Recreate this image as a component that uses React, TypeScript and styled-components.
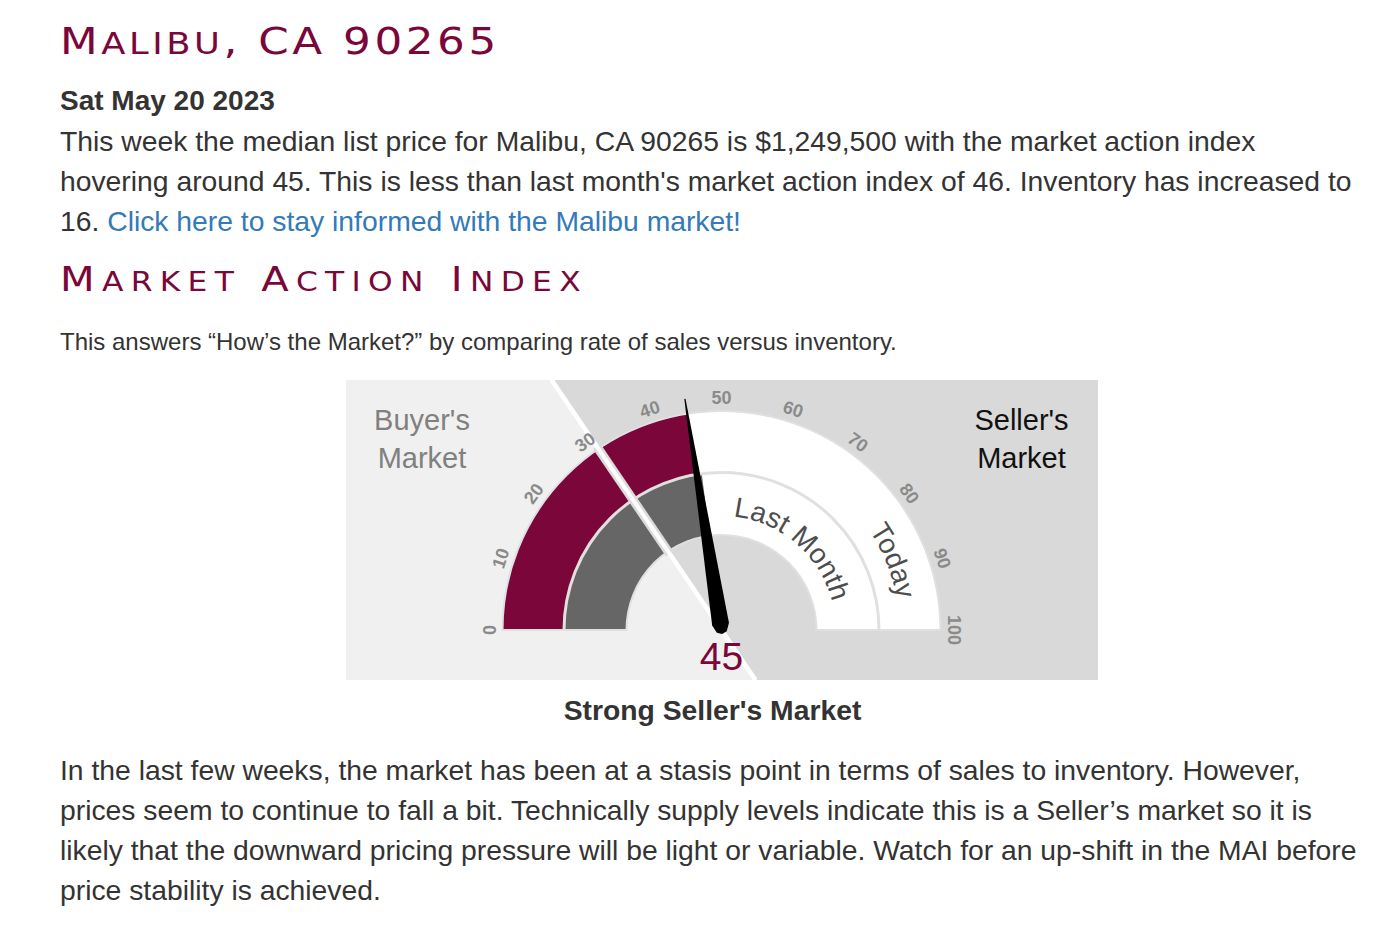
import React from "react";
import styled, { createGlobalStyle } from "styled-components";

const MAROON = "#7a063a";

const GlobalStyle = createGlobalStyle`
  body {
    margin: 0;
    background: #fff;
    color: #333;
    font-family: "Liberation Sans", Arial, sans-serif;
  }
`;

const Page = styled.main`
  width: 1305px;
  padding: 20px 0 0 60px;
`;

const Title = styled.h1<{ $size: number; $spacing: number; $lower: number }>`
  width: fit-content;
  margin: 0;
  font-family: "DejaVu Sans", Verdana, sans-serif;
  font-weight: normal;
  font-size: ${(p) => p.$size}px;
  line-height: 44px;
  letter-spacing: ${(p) => p.$spacing}px;
  color: ${MAROON};
  white-space: nowrap;
  transform: scaleX(1.18);
  transform-origin: left center;

  span {
    font-size: ${(p) => p.$lower}em;
    text-transform: uppercase;
  }
`;

const Lead = styled.p`
  margin: 15px 0 0;
  font-size: 28.3px;
  line-height: 40px;
`;

const DateLine = styled.strong`
  display: block;
  font-size: 28px;
`;

const Link = styled.a`
  color: #337ab7;
  text-decoration: none;
`;

const SectionTitle = styled(Title)`
  margin-top: 16px;
`;

const Note = styled.p`
  margin: 23px 0 0;
  font-size: 24px;
  line-height: 30px;
`;

const Panel = styled.figure`
  margin: 23px 0 0 286px;
  width: 752px;
  height: 300px;
  overflow: hidden;
`;

const GaugeSvg = styled.svg`
  display: block;
  font-family: "Liberation Sans", Arial, sans-serif;
`;

const Verdict = styled.div`
  margin-top: 10px;
  text-align: center;
  font-weight: bold;
  font-size: 28.3px;
  line-height: 40px;
`;

const Summary = styled.p`
  margin: 20px 0 0;
  font-size: 28.3px;
  line-height: 40px;
`;

const TickLabel = styled.text`
  font-weight: bold;
  font-size: 18px;
  fill: #8a8a8a;
`;

const SideLabel = styled.text<{ $dark?: boolean }>`
  font-size: 29px;
  fill: ${(p) => (p.$dark ? "#111" : "#808080")};
`;

const ArcLabel = styled.text`
  font-size: 28px;
  fill: #4d4d4d;
`;

const Reading = styled.text`
  font-size: 39px;
  fill: ${MAROON};
`;

// first letter of each word full size, the lower-case rest as small capitals
const SmallCaps = ({ text }: { text: string }) => (
  <>
    {text.split(/(\s+)/).map((word, i) => {
      const head = word.slice(0, 1);
      const rest = word.slice(1);
      const lowerRun = rest.match(/^[a-z]+/);
      if (!lowerRun) return <React.Fragment key={i}>{word}</React.Fragment>;
      return (
        <React.Fragment key={i}>
          {head}
          <span>{lowerRun[0]}</span>
          {rest.slice(lowerRun[0].length)}
        </React.Fragment>
      );
    })}
  </>
);

const CX = 375.5;
const CY = 250;

const ang = (v: number) => Math.PI - (v / 100) * Math.PI;
const pt = (r: number, v: number) => [CX + r * Math.cos(ang(v)), CY - r * Math.sin(ang(v))];

const sector = (r1: number, r2: number, v1: number, v2: number) => {
  const [ax, ay] = pt(r2, v1);
  const [bx, by] = pt(r2, v2);
  const [cx, cy] = pt(r1, v2);
  const [dx, dy] = pt(r1, v1);
  return `M${ax} ${ay} A${r2} ${r2} 0 0 1 ${bx} ${by} L${cx} ${cy} A${r1} ${r1} 0 0 0 ${dx} ${dy} Z`;
};

const arcFrom = (r: number, degStart: number) => {
  const a = (degStart * Math.PI) / 180;
  return `M${CX + r * Math.cos(a)} ${CY - r * Math.sin(a)} A${r} ${r} 0 0 1 ${CX + r} ${CY}`;
};

const Gauge = ({ today, lastMonth, split }: { today: number; lastMonth: number; split: number }) => {
  const a = ang(split);
  const ux = Math.cos(a);
  const uy = -Math.sin(a);
  // where the divider meets the top and bottom edge of the panel
  const topX = CX + ux * (-CY / uy);
  const botX = CX + ux * ((300 - CY) / uy);
  const [gx1, gy1] = pt(92, split);
  const [gx2, gy2] = pt(222, split);
  const ticks = Array.from({ length: 11 }, (_, i) => i * 10);

  return (
    <GaugeSvg width="752" height="300" viewBox="0 0 752 300">
      <polygon points={`0,0 ${topX},0 ${botX},300 0,300`} fill="#f0f0f0" />
      <polygon points={`${topX},0 752,0 752,300 ${botX},300`} fill="#d9d9d9" />
      <line x1={topX} y1={0} x2={botX} y2={300} stroke="#fff" strokeWidth="4.5" />

      <path d={sector(158, 219, 0, 100)} fill="#fff" />
      <path d={sector(95, 157, 0, 100)} fill="#fff" />
      <path d={sector(158, 219, 0, today)} fill={MAROON} />
      <path d={sector(95, 157, 0, lastMonth)} fill="#666" />
      <path d={sector(158, 219, 0, 100)} fill="none" stroke="#e0e0e0" strokeWidth="2" />
      <path d={sector(95, 157, 0, 100)} fill="none" stroke="#e0e0e0" strokeWidth="2" />

      <line x1={gx1} y1={gy1} x2={gx2} y2={gy2} stroke="#dcdcdc" strokeWidth="9" />
      <line x1={topX} y1={0} x2={botX} y2={300} stroke="#fff" strokeWidth="4" />

      {ticks.map((v) => {
        const [x, y] = pt(232, v);
        return (
          <TickLabel
            key={v}
            x={x}
            y={y}
            textAnchor="middle"
            dominantBaseline="central"
            transform={`rotate(${v * 1.8 - 90} ${x} ${y})`}
          >
            {v}
          </TickLabel>
        );
      })}

      <defs>
        <path id="arc-last-month" d={arcFrom(114, 84)} />
        <path id="arc-today" d={arcFrom(178, 34)} />
      </defs>
      <ArcLabel>
        <textPath href="#arc-last-month">Last Month</textPath>
      </ArcLabel>
      <ArcLabel>
        <textPath href="#arc-today">Today</textPath>
      </ArcLabel>

      <SideLabel x="76" y="50" textAnchor="middle">Buyer's</SideLabel>
      <SideLabel x="76" y="88" textAnchor="middle">Market</SideLabel>
      <SideLabel $dark x="675.5" y="50" textAnchor="middle">Seller's</SideLabel>
      <SideLabel $dark x="675.5" y="88" textAnchor="middle">Market</SideLabel>

      <g transform={`rotate(${today * 1.8 - 90} ${CX} ${CY})`}>
        <polygon
          points={[
            [CX - 0.6, CY - 234],
            [CX + 0.6, CY - 234],
            [CX + 8.5, CY - 6],
            [CX + 5, CY + 2],
            [CX, CY + 4],
            [CX - 5, CY + 2],
            [CX - 8.5, CY - 6],
          ]
            .map((p) => p.join(","))
            .join(" ")}
          fill="#000"
        />
      </g>
      <Reading x={CX} y="290" textAnchor="middle">
        {today}
      </Reading>
    </GaugeSvg>
  );
};

export default function App() {
  return (
    <>
      <GlobalStyle />
      <Page>
        <Title $size={37} $spacing={3} $lower={0.81}>
          <SmallCaps text="Malibu, CA 90265" />
        </Title>
        <Lead>
          <DateLine>Sat May 20 2023</DateLine>
          This week the median list price for Malibu, CA 90265 is $1,249,500 with the market action index
          hovering around 45. This is less than last month's market action index of 46. Inventory has
          increased to 16. <Link href="#">Click here to stay informed with the Malibu market!</Link>
        </Lead>
        <SectionTitle $size={34} $spacing={6.2} $lower={0.78}>
          <SmallCaps text="Market Action Index" />
        </SectionTitle>
        <Note>This answers “How’s the Market?” by comparing rate of sales versus inventory.</Note>
        <Panel>
          <Gauge today={45} lastMonth={46} split={31} />
        </Panel>
        <Verdict>Strong Seller's Market</Verdict>
        <Summary>
          In the last few weeks, the market has been at a stasis point in terms of sales to inventory.
          However, prices seem to continue to fall a bit. Technically supply levels indicate this is a
          Seller’s market so it is likely that the downward pricing pressure will be light or variable.
          Watch for an up-shift in the MAI before price stability is achieved.
        </Summary>
      </Page>
    </>
  );
}
